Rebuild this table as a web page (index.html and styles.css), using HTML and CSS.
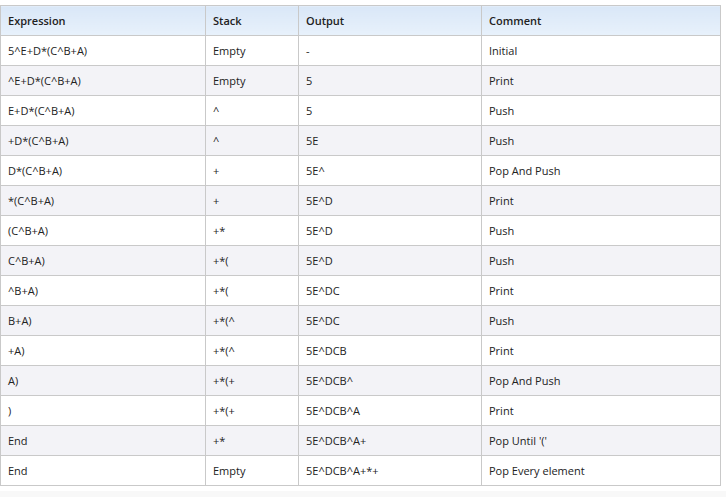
FILE: index.html
```html
<!DOCTYPE html>
<html>
<head>
<meta charset="utf-8">
<link rel="stylesheet" href="styles.css">
</head>
<body>
<div class="page">
<table class="steps">
<colgroup><col class="c1"><col class="c2"><col class="c3"><col class="c4"></colgroup>
<thead>
<tr><th>Expression</th><th>Stack</th><th>Output</th><th>Comment</th></tr>
</thead>
<tbody>
<tr><td>5^E+D*(C^B+A)</td><td>Empty</td><td>-</td><td>Initial</td></tr>
<tr><td>^E+D*(C^B+A)</td><td>Empty</td><td>5</td><td>Print</td></tr>
<tr><td>E+D*(C^B+A)</td><td>^</td><td>5</td><td>Push</td></tr>
<tr><td>+D*(C^B+A)</td><td>^</td><td>5E</td><td>Push</td></tr>
<tr><td>D*(C^B+A)</td><td>+</td><td>5E^</td><td>Pop And Push</td></tr>
<tr><td>*(C^B+A)</td><td>+</td><td>5E^D</td><td>Print</td></tr>
<tr><td>(C^B+A)</td><td>+*</td><td>5E^D</td><td>Push</td></tr>
<tr><td>C^B+A)</td><td>+*(</td><td>5E^D</td><td>Push</td></tr>
<tr><td>^B+A)</td><td>+*(</td><td>5E^DC</td><td>Print</td></tr>
<tr><td>B+A)</td><td>+*(^</td><td>5E^DC</td><td>Push</td></tr>
<tr><td>+A)</td><td>+*(^</td><td>5E^DCB</td><td>Print</td></tr>
<tr><td>A)</td><td>+*(+</td><td>5E^DCB^</td><td>Pop And Push</td></tr>
<tr><td>)</td><td>+*(+</td><td>5E^DCB^A</td><td>Print</td></tr>
<tr><td>End</td><td>+*</td><td>5E^DCB^A+</td><td>Pop Until '('</td></tr>
<tr><td>End</td><td>Empty</td><td>5E^DCB^A+*+</td><td>Pop Every element</td></tr>
</tbody>
</table>
<div class="foot"></div>
</div>
</body>
</html>
```
FILE: styles.css
```css
html, body {
  margin: 0;
  padding: 0;
  background: #ffffff;
}
.page {
  padding-top: 5px;
  font-family: "Open Sans", "Noto Sans", sans-serif;
  font-size: 11px;
  color: #222222;
}
.steps {
  border-collapse: collapse;
  table-layout: fixed;
  width: 720px;
}
.c1 { width: 205px; }
.c2 { width: 93px; }
.c3 { width: 183px; }
.c4 { width: 239px; }
.steps th, .steps td {
  border: 1px solid #c9c9c9;
  height: 29px;
  padding: 0 0 0 7px;
  text-align: left;
  vertical-align: middle;
  white-space: nowrap;
  overflow: hidden;
}
.steps th {
  font-weight: 600;
  color: #222222;
  background: linear-gradient(#d9e7f7, #e8f1fb);
}
.steps tbody tr:nth-child(even) td {
  background: #f3f3f7;
}
.foot {
  height: 6px;
  margin-top: 5px;
  background: #f8f8f8;
}
```
